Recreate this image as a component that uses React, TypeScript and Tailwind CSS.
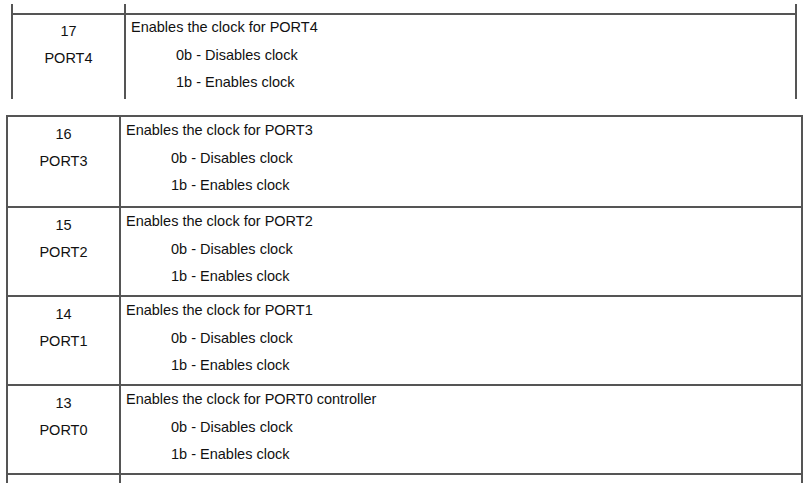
import React from "react";

const rows = [
  { bit: "16", name: "PORT3", desc: "Enables the clock for PORT3", h: "h-[91px]" },
  { bit: "15", name: "PORT2", desc: "Enables the clock for PORT2", h: "h-[89px]" },
  { bit: "14", name: "PORT1", desc: "Enables the clock for PORT1", h: "h-[89px]" },
  { bit: "13", name: "PORT0", desc: "Enables the clock for PORT0 controller", h: "h-[89px]" },
];

function Cells({ bit, name, desc }: { bit: string; name: string; desc: string }) {
  return (
    <>
      <div className="w-[113px] shrink-0 border-r-2 border-[#555] pt-[4px] text-center leading-[27px]">
        <div>{bit}</div>
        <div>{name}</div>
      </div>
      <div className="flex-1 pl-[5px] leading-[27.5px]">
        <div>{desc}</div>
        <div className="pl-[45px]">0b - Disables clock</div>
        <div className="pl-[45px]">1b - Enables clock</div>
      </div>
    </>
  );
}

export default function App() {
  return (
    <div
      className="w-[812px] h-[483px] overflow-hidden bg-white text-[14.5px] text-[#111]"
      style={{ fontFamily: '"Liberation Sans", Arial, sans-serif' }}
    >
      <div className="ml-[11px] mt-[4px] w-[786px] border-x-2 border-[#555]">
        <div className="flex h-[9px]">
          <div className="w-[113px] border-r-2 border-[#555]" />
        </div>
        <div className="flex h-[86px] border-t-2 border-[#555]">
          <div className="w-[113px] shrink-0 border-r-2 border-[#555] pt-[3px] text-center leading-[27px]">
            <div>17</div>
            <div>PORT4</div>
          </div>
          <div className="flex-1 pl-[5px] leading-[27.5px] -mt-[1px]">
            <div>Enables the clock for PORT4</div>
            <div className="pl-[45px]">0b - Disables clock</div>
            <div className="pl-[45px]">1b - Enables clock</div>
          </div>
        </div>
      </div>

      <div className="ml-[6px] mt-[16px] w-[797px] border-x-2 border-[#555]">
        {rows.map((r) => (
          <div key={r.bit} className={`flex border-t-2 border-[#555] ${r.h}`}>
            <Cells bit={r.bit} name={r.name} desc={r.desc} />
          </div>
        ))}
        <div className="flex h-[20px] border-t-2 border-[#555]">
          <div className="w-[113px] border-r-2 border-[#555]" />
        </div>
      </div>
    </div>
  );
}
